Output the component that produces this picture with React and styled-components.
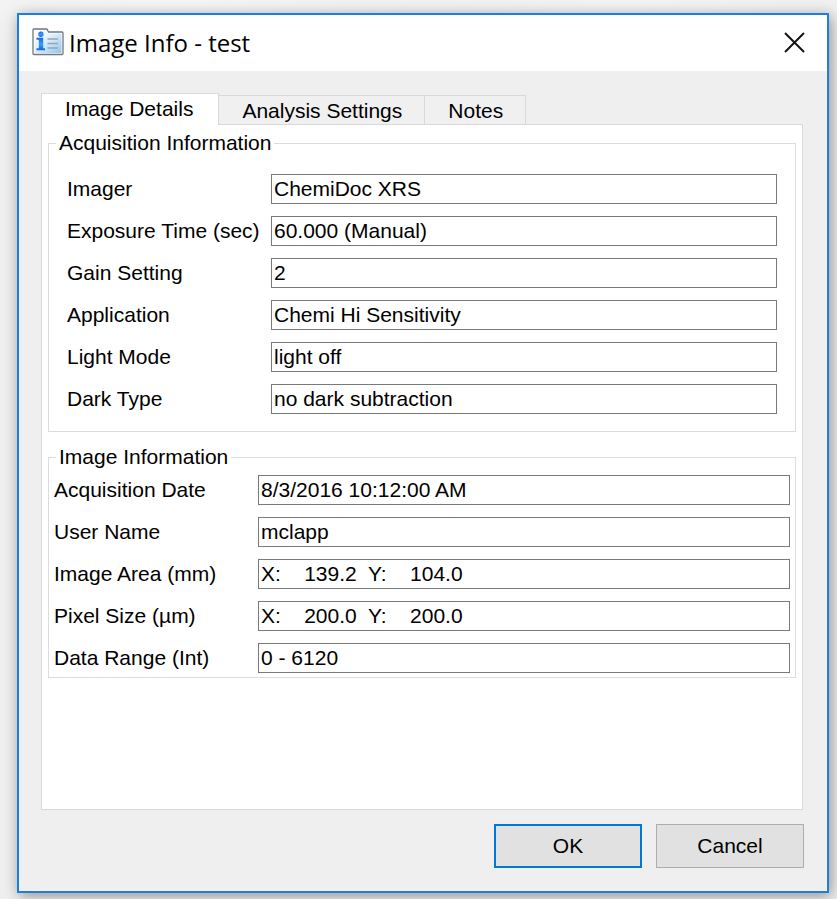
import React, { useState } from "react";
import styled, { createGlobalStyle, css } from "styled-components";

const GlobalStyle = createGlobalStyle`
  *, *::before, *::after { box-sizing: border-box; }
  body {
    margin: 0;
    color: #000;
    font: 21px/24px "Liberation Sans", Arial, sans-serif;
    background:
      radial-gradient(ellipse 320px 60px at 20% 0, #f6f6f6, transparent),
      radial-gradient(ellipse 300px 60px at 75% 0, #f4f4f4, transparent),
      #efefef;
  }
  button, input { font: inherit; color: inherit; }
`;

const Desktop = styled.div`
  display: flex;
  min-height: 100vh;
  padding: 13px 8px 6px 17px;
`;

const Dialog = styled.section`
  display: flex;
  flex-direction: column;
  flex: 1;
  min-width: 0;
  border: 2px solid #1a80d9;
  background: #efefef;
  box-shadow: 2px 3px 14px rgba(0, 0, 0, 0.4);
`;

const TitleBar = styled.header`
  display: flex;
  align-items: center;
  gap: 5px;
  height: 56px;
  padding: 0 22px 2px 13px;
  background: #fff;
`;

const Title = styled.h1`
  flex: 1;
  margin: 0;
  padding-top: 2px;
  font: 400 24px/32px "Open Sans", "Noto Sans", sans-serif;
`;

const CloseButton = styled.button`
  display: flex;
  padding: 0;
  border: 0;
  background: none;
`;

const Body = styled.div`
  display: flex;
  flex-direction: column;
  flex: 1;
  padding: 22px 23px 23px 22px;
`;

const TabList = styled.div`
  display: flex;
  align-items: flex-end;
  height: 31px;
`;

const Tab = styled.button`
  height: 29px;
  padding: 2px 22px 0 23px;
  border: 1px solid #d9d9d9;
  border-width: 1px 1px 0 0;
  background: #f0f0f0;
  line-height: 24px;
  white-space: nowrap;

  ${({ $active }) =>
    $active &&
    css`
      position: relative;
      height: 32px;
      margin-bottom: -1px;
      padding: 0 25px 2px 23px;
      border-left-width: 1px;
      background: #fff;
    `}
`;

const Pane = styled.div`
  flex: 1;
  display: flex;
  flex-direction: column;
  gap: 13px;
  margin-right: 1px;
  padding: 6px;
  border: 1px solid #d9d9d9;
  background: #fff;
`;

const Group = styled.fieldset`
  min-width: 0;
  margin: 0;
  padding: 0;
  border: 1px solid #dcdcdc;
`;

const GroupTitle = styled.legend`
  margin-left: 7px;
  padding: 0 3px;
`;

const Fields = styled.div`
  display: grid;
  gap: 12px;
  padding: ${({ $compact }) => ($compact ? "6px 5px 4px 5px" : "19px 18px 17px 18px")};
`;

const Row = styled.div`
  display: grid;
  grid-template-columns: 204px 1fr;
  align-items: center;
`;

const Label = styled.label`
  white-space: nowrap;
`;

const TextBox = styled.input`
  width: 100%;
  min-width: 0;
  height: 30px;
  padding: 0 2px;
  border: 1px solid #7a7a7a;
  border-radius: 0;
  background: #fff;
  outline: none;
`;

const Actions = styled.footer`
  display: flex;
  justify-content: flex-end;
  gap: 14px;
  margin-top: 14px;
`;

const ActionButton = styled.button`
  width: 148px;
  height: 44px;
  padding: 0;
  border: ${({ $primary }) => ($primary ? "2px solid #0078d7" : "1px solid #adadad")};
  background: #e1e1e1;
`;

const InfoIcon = () => (
  <svg width="32" height="28" viewBox="0 0 32 28" aria-hidden="true">
    <defs>
      <linearGradient id="card" x1="0" y1="0" x2="1" y2="1">
        <stop offset="0" stopColor="#ffffff" />
        <stop offset="0.4" stopColor="#e2f2fd" />
        <stop offset="1" stopColor="#8cc6f2" />
      </linearGradient>
      <linearGradient id="glyph" x1="0" y1="0" x2="0" y2="1">
        <stop offset="0" stopColor="#1565e0" />
        <stop offset="0.5" stopColor="#3b9bfc" />
        <stop offset="1" stopColor="#1565d8" />
      </linearGradient>
    </defs>
    <path d="M1 2Q1 1 2 1H14.5Q15.5 1 15.5 2L16.5 4H30Q31 4 31 5V25.5Q31 26.5 30 26.5H2Q1 26.5 1 25.5Z" fill="#fff" stroke="#727679" strokeWidth="1.3" />
    <path d="M2.5 2.5H14L15.5 5.5H29.5V25H2.5Z" fill="url(#card)" />
    <g fill="url(#glyph)">
      <circle cx="8.9" cy="6.2" r="2.7" />
      <path d="M4.5 9.8H11.2V20.3H13V22.3H4.5V20.3H6.8V11.8H4.5Z" />
    </g>
    <path d="M15.5 11H26M15.5 15.5H26M15.5 20H26" stroke="#9aa5ad" strokeWidth="1.3" />
  </svg>
);

const CloseIcon = () => (
  <svg width="21" height="21" viewBox="0 0 21 21" aria-hidden="true">
    <path d="M1 1L20 20M20 1L1 20" stroke="#111" strokeWidth="1.9" fill="none" />
  </svg>
);

const acquisition = [
  ["imager", "Imager", "ChemiDoc XRS"],
  ["exposure", "Exposure Time (sec)", "60.000 (Manual)"],
  ["gain", "Gain Setting", "2"],
  ["application", "Application", "Chemi Hi Sensitivity"],
  ["light", "Light Mode", "light off"],
  ["dark", "Dark Type", "no dark subtraction"],
];

const image = [
  ["date", "Acquisition Date", "8/3/2016 10:12:00 AM"],
  ["user", "User Name", "mclapp"],
  ["area", "Image Area (mm)", "X:    139.2  Y:    104.0"],
  ["pixel", "Pixel Size (µm)", "X:    200.0  Y:    200.0"],
  ["range", "Data Range (Int)", "0 - 6120"],
];

const tabs = ["Image Details", "Analysis Settings", "Notes"];

function FieldGroup({ title, fields, compact }) {
  return (
    <Group>
      <GroupTitle>{title}</GroupTitle>
      <Fields $compact={compact}>
        {fields.map(([id, label, value]) => (
          <Row key={id}>
            <Label htmlFor={id}>{label}</Label>
            <TextBox id={id} type="text" readOnly value={value} />
          </Row>
        ))}
      </Fields>
    </Group>
  );
}

export default function App() {
  const [active, setActive] = useState(tabs[0]);
  return (
    <>
      <GlobalStyle />
      <Desktop>
        <Dialog role="dialog" aria-labelledby="dialog-title">
          <TitleBar>
            <InfoIcon />
            <Title id="dialog-title">Image Info - test</Title>
            <CloseButton type="button" aria-label="Close">
              <CloseIcon />
            </CloseButton>
          </TitleBar>
          <Body>
            <TabList role="tablist">
              {tabs.map((tab) => (
                <Tab
                  key={tab}
                  type="button"
                  role="tab"
                  aria-selected={tab === active}
                  $active={tab === active}
                  onClick={() => setActive(tab)}
                >
                  {tab}
                </Tab>
              ))}
            </TabList>
            <Pane role="tabpanel" aria-label={active}>
              {active === tabs[0] && (
                <>
                  <FieldGroup title="Acquisition Information" fields={acquisition} />
                  <FieldGroup title="Image Information" fields={image} compact />
                </>
              )}
            </Pane>
            <Actions>
              <ActionButton type="button" $primary>OK</ActionButton>
              <ActionButton type="button">Cancel</ActionButton>
            </Actions>
          </Body>
        </Dialog>
      </Desktop>
    </>
  );
}
